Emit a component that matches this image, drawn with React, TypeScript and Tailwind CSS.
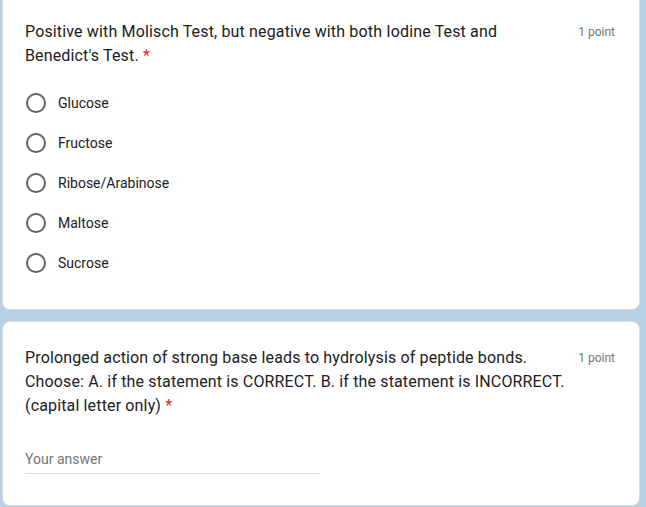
const OPTIONS = ['Glucose', 'Fructose', 'Ribose/Arabinose', 'Maltose', 'Sucrose'];

function Radio() {
  return <div className="w-5 h-5 rounded-full border-2 border-[#5f6368] shrink-0" />;
}

function QuestionTitle({ children }: { children: React.ReactNode }) {
  return (
    <div className="flex items-start">
      <div className="flex-1 min-w-0 mr-2 text-base leading-6 text-[#202124] tracking-[0.15px]">
        {children} <span className="text-[#d93025]">*</span>
      </div>
      <div className="text-xs leading-6 text-[#70757a] shrink-0">1 point</div>
    </div>
  );
}

export default function App() {
  return (
    <div
      className="w-[646px] h-[507px] bg-[#b7d0e6] overflow-hidden pl-[2px] pr-[6px]"
      style={{ fontFamily: 'Roboto, "Noto Sans", Arial, sans-serif' }}
    >
      {/* Question 1 (top cut off) */}
      <div className="bg-white border border-t-0 border-[#dadce0] rounded-b-lg pt-5 pl-[22px] pr-6 pb-[26px]">
        <QuestionTitle>
          Positive with Molisch Test, but negative with both Iodine Test and Benedict's Test.
        </QuestionTitle>
        <div className="mt-[15px]">
          {OPTIONS.map((opt) => (
            <div key={opt} className="h-10 flex items-center">
              <div className="pl-px">
                <Radio />
              </div>
              <span className="ml-3 text-sm text-[#202124]">{opt}</span>
            </div>
          ))}
        </div>
      </div>

      {/* Question 2 */}
      <div className="mt-[11px] bg-white border border-[#dadce0] rounded-lg pt-6 pl-[22px] pr-6 pb-[31px]">
        <QuestionTitle>
          Prolonged action of strong base leads to hydrolysis of peptide bonds. Choose: A. if the
          statement is CORRECT. B. if the statement is INCORRECT. (capital letter only)
        </QuestionTitle>
        <div className="mt-[31px] w-[295px] border-b border-[#dadce0] pb-1">
          <div className="text-sm leading-5 text-[#70757a]">Your answer</div>
        </div>
      </div>
    </div>
  );
}
